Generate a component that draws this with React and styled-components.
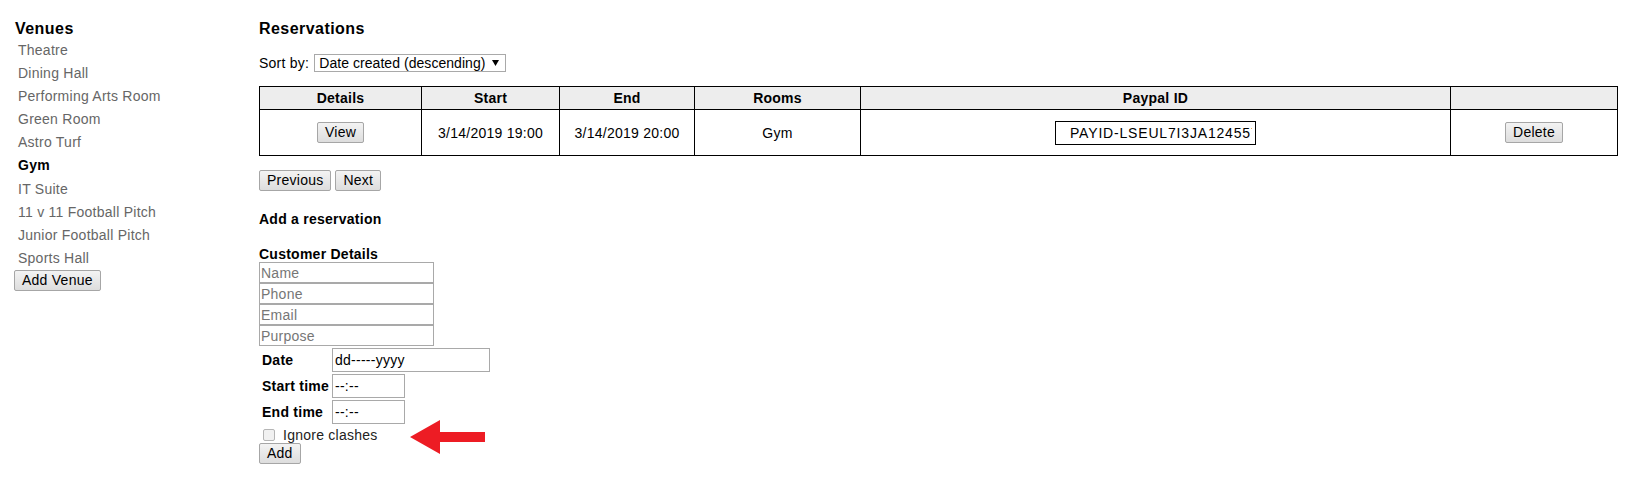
import React from 'react'
import styled, { createGlobalStyle } from 'styled-components'

const GlobalStyle = createGlobalStyle`
    body{
        margin:0;
        background:#fff;
        font-family:"Liberation Sans", Arial, sans-serif;
        font-size:14px;
        letter-spacing:0.25px;
        color:#000;
    }
`

const Page = styled.div`
    display:flex;
    width:1652px;
    min-height:487px;
    padding-top:19px;
    box-sizing:border-box;
`

const Sidebar = styled.div`
    width:259px;
    padding-left:15px;
    box-sizing:border-box;
    flex-shrink:0;
`

const Heading = styled.div`
    font-size:16px;
    font-weight:700;
    line-height:19px;
    letter-spacing:0.45px;
`

const VenueList = styled.ul`
    list-style:none;
    margin:0;
    padding:1px 0 0 3px;
`

const VenueItem = styled.li`
    line-height:23.1px;
    color:${p => p.active ? '#000' : '#666'};
    font-weight:${p => p.active ? 700 : 400};
    cursor:pointer;
`

const Button = styled.button`
    font-family:"Liberation Sans", Arial, sans-serif;
    font-size:14px;
    letter-spacing:0.25px;
    color:#000;
    height:21px;
    padding:0 7px;
    margin:0;
    border:1px solid #a6a6a6;
    border-radius:2px;
    background:linear-gradient(#f3f3f3, #dddddd);
    line-height:19px;
    cursor:pointer;
`

const Main = styled.div`
    flex:1;
    padding-right:35px;
    padding-left:0;
`

const SortRow = styled.div`
    display:flex;
    align-items:center;
    height:18px;
    margin-top:16px;
    gap:5px;
`

const FakeSelect = styled.div`
    display:flex;
    align-items:center;
    justify-content:space-between;
    width:192px;
    height:18px;
    box-sizing:border-box;
    border:1px solid #a9a9a9;
    padding:0 6px 0 4px;
    background:#fff;
    color:#000;
    letter-spacing:0.05px;
`

const Table = styled.table`
    width:100%;
    margin-top:14px;
    border-collapse:collapse;
    table-layout:fixed;
    border:1px solid #000;
`

const Th = styled.th`
    background:#ededed;
    border:1px solid #000;
    height:22px;
    padding:0;
    font-weight:700;
    text-align:center;
`

const Td = styled.td`
    border:1px solid #000;
    height:45px;
    padding:0;
    text-align:center;
    vertical-align:middle;
`

const PaypalInput = styled.input`
    width:201px;
    height:24px;
    box-sizing:border-box;
    border:1px solid #000;
    padding:0 3px 0 14px;
    font-family:"Liberation Sans", Arial, sans-serif;
    font-size:14px;
    letter-spacing:0.82px;
    color:#000;
    vertical-align:middle;
    outline:none;
`

const Pager = styled.div`
    display:flex;
    gap:4px;
    margin-top:14px;
`

const SubHeading = styled.div`
    font-weight:700;
    line-height:16px;
    margin-top:${p => p.gap}px;
`

const Field = styled.input`
    display:block;
    width:175px;
    height:21px;
    box-sizing:border-box;
    margin:0;
    border:1px solid #a9a9a9;
    padding:0 1px;
    font-family:"Liberation Sans", Arial, sans-serif;
    font-size:14px;
    letter-spacing:0.25px;
    color:#000;
    &::placeholder{
        color:#767676;
    }
`

const WhenTable = styled.table`
    border-collapse:separate;
    border-spacing:2px;
    margin-left:0;
`

const Label = styled.td`
    width:68px;
    padding:0 0 0 1px;
    font-weight:700;
    vertical-align:middle;
    white-space:nowrap;
`

const Cell = styled.td`
    padding:0;
`

const WhenInput = styled.input`
    display:block;
    width:${p => p.w}px;
    height:24px;
    box-sizing:border-box;
    margin:0;
    border:1px solid #a9a9a9;
    padding:0 2px;
    font-family:"Liberation Sans", Arial, sans-serif;
    font-size:14px;
    letter-spacing:0.25px;
    color:#000;
`

const CheckRow = styled.label`
    position:relative;
    display:flex;
    align-items:center;
    height:17px;
    color:#222;
`

const Check = styled.input`
    appearance:none;
    width:12px;
    height:12px;
    margin:0 8px 0 4px;
    border:1px solid #b5b5b5;
    border-radius:2px;
    background:#f1f1f1;
`

const Arrow = styled.svg`
    position:absolute;
    left:150px;
    top:-7px;
`

const venues = ['Theatre','Dining Hall','Performing Arts Room','Green Room','Astro Turf','Gym','IT Suite','11 v 11 Football Pitch','Junior Football Pitch','Sports Hall']

const cols = [162,138,135,166,590,167]

export default function App(){
    return (
        <Page>
            <GlobalStyle/>
            <Sidebar>
                <Heading>Venues</Heading>
                <VenueList>
                    {venues.map(v => (
                        <VenueItem key={v} active={v==='Gym'}>{v}</VenueItem>
                    ))}
                </VenueList>
                <Button style={{marginLeft:-1}}>Add Venue</Button>
            </Sidebar>
            <Main>
                <Heading>Reservations</Heading>
                <SortRow>
                    <span>Sort by:</span>
                    <FakeSelect>
                        <span>Date created (descending)</span>
                        <svg width="7" height="6" viewBox="0 0 7 6"><path d="M0 0h7L3.5 6z" fill="#000"/></svg>
                    </FakeSelect>
                </SortRow>
                <Table>
                    <colgroup>
                        {cols.map((w,i) => <col key={i} style={{width:w}}/>)}
                    </colgroup>
                    <thead>
                        <tr>
                            <Th>Details</Th>
                            <Th>Start</Th>
                            <Th>End</Th>
                            <Th>Rooms</Th>
                            <Th>Paypal ID</Th>
                            <Th></Th>
                        </tr>
                    </thead>
                    <tbody>
                        <tr>
                            <Td><Button>View</Button></Td>
                            <Td>3/14/2019 19:00</Td>
                            <Td>3/14/2019 20:00</Td>
                            <Td>Gym</Td>
                            <Td><PaypalInput readOnly value="PAYID-LSEUL7I3JA124557X5889M2031234H"/></Td>
                            <Td><Button>Delete</Button></Td>
                        </tr>
                    </tbody>
                </Table>
                <Pager>
                    <Button>Previous</Button>
                    <Button>Next</Button>
                </Pager>
                <SubHeading gap={20}>Add a reservation</SubHeading>
                <SubHeading gap={19}>Customer Details</SubHeading>
                <Field placeholder="Name"/>
                <Field placeholder="Phone"/>
                <Field placeholder="Email"/>
                <Field placeholder="Purpose"/>
                <WhenTable>
                    <tbody>
                        <tr>
                            <Label>Date</Label>
                            <Cell><WhenInput w={158} readOnly value="dd-----yyyy"/></Cell>
                        </tr>
                        <tr>
                            <Label>Start time</Label>
                            <Cell><WhenInput w={73} readOnly value="--:--"/></Cell>
                        </tr>
                        <tr>
                            <Label>End time</Label>
                            <Cell><WhenInput w={73} readOnly value="--:--"/></Cell>
                        </tr>
                    </tbody>
                </WhenTable>
                <CheckRow>
                    <Check type="checkbox"/>
                    Ignore clashes
                    <Arrow width="77" height="36" viewBox="0 0 77 36">
                        <polygon points="1,18 31,1 31,13 76,13 76,23 31,23 31,35" fill="#ed1c24"/>
                    </Arrow>
                </CheckRow>
                <Button>Add</Button>
            </Main>
        </Page>
    )
}
